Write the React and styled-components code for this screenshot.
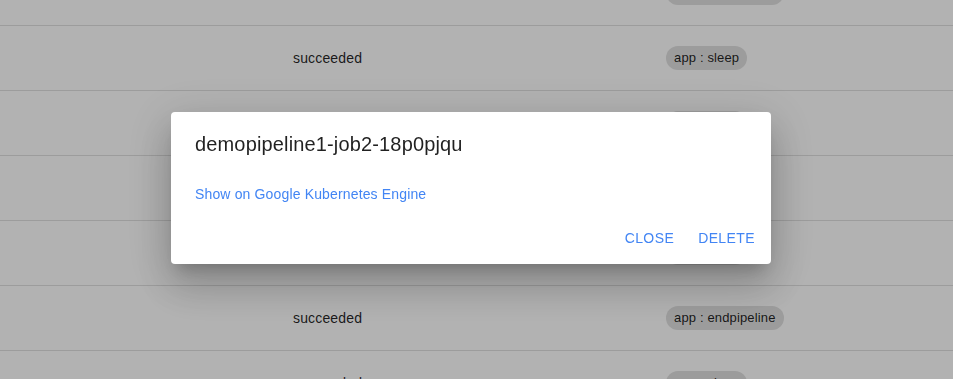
import React from 'react';
import styled, { createGlobalStyle } from 'styled-components';

const GlobalStyle = createGlobalStyle`
  html, body {
    margin: 0;
    padding: 0;
    background: #fff;
    overflow: hidden;
  }
  body {
    font-family: "Liberation Sans", Arial, Helvetica, sans-serif;
    color: rgba(0, 0, 0, 0.87);
  }
`;

const jobs = [
  { status: 'succeeded', label: 'app : endpipeline' },
  { status: 'succeeded', label: 'app : sleep' },
  { status: 'succeeded', label: 'app : sleep' },
  { status: 'succeeded', label: 'app : sleep' },
  { status: 'succeeded', label: 'app : sleep' },
  { status: 'succeeded', label: 'app : endpipeline' },
  { status: 'succeeded', label: 'app : sleep' },
];

export default function App() {
  return (
    <>
      <GlobalStyle />
      <Table>
        {jobs.map((job, i) => (
          <Row key={i}>
            <Cell />
            <Cell>{job.status}</Cell>
            <Cell>
              <Chip>{job.label}</Chip>
            </Cell>
          </Row>
        ))}
      </Table>

      <Backdrop>
        <Dialog role="dialog">
          <Title>demopipeline1-job2-18p0pjqu</Title>
          <Content>
            <LinkText href="#">Show on Google Kubernetes Engine</LinkText>
          </Content>
          <Actions>
            <TextButton>Close</TextButton>
            <TextButton>Delete</TextButton>
          </Actions>
        </Dialog>
      </Backdrop>
    </>
  );
}

const Table = styled.div`
  display: flex;
  flex-direction: column;
  height: 379px;
  overflow: hidden;
`;

const Row = styled.div`
  flex: none;
  display: grid;
  grid-template-columns: 293px 373px 1fr;
  height: 65px;
  box-sizing: border-box;
  border-bottom: 1px solid #e0e0e0;

  &:first-child {
    margin-top: -39px;
  }
`;

const Cell = styled.div`
  display: flex;
  align-items: center;
  font-size: 14px;
  line-height: 20px;
  letter-spacing: 0.01071em;
`;

const Chip = styled.span`
  display: inline-flex;
  align-items: center;
  height: 24px;
  padding: 0 8px;
  border-radius: 12px;
  background: #e0e0e0;
  font-size: 13px;
  color: rgba(0, 0, 0, 0.87);
  white-space: nowrap;
`;

const Backdrop = styled.div`
  position: fixed;
  inset: 0;
  background: rgba(0, 0, 0, 0.3);
  display: flex;
  align-items: center;
  justify-content: center;
  padding: 0 11px 3px 0;
`;

const Dialog = styled.div`
  width: 600px;
  background: #fff;
  border-radius: 4px;
  display: flex;
  flex-direction: column;
  box-shadow: 0px 11px 15px -7px rgba(0, 0, 0, 0.2),
    0px 24px 38px 3px rgba(0, 0, 0, 0.14),
    0px 9px 46px 8px rgba(0, 0, 0, 0.12);
`;

const Title = styled.h2`
  margin: 0;
  padding: 16px 24px 0;
  font-size: 20px;
  font-weight: 400;
  line-height: 32px;
  letter-spacing: 0.0075em;
  color: rgba(0, 0, 0, 0.87);
`;

const Content = styled.div`
  padding: 24px 24px 8px;
  font-size: 14px;
  line-height: 20px;
  letter-spacing: 0.01071em;
`;

const LinkText = styled.a`
  color: #4285f4;
  text-decoration: none;
`;

const Actions = styled.div`
  display: flex;
  justify-content: flex-end;
  gap: 8px;
  padding: 8px;
`;

const TextButton = styled.button`
  min-width: 64px;
  padding: 6px 8px;
  border: none;
  background: none;
  border-radius: 4px;
  font-family: inherit;
  font-size: 14px;
  font-weight: 400;
  line-height: 24.5px;
  letter-spacing: 0.4px;
  text-transform: uppercase;
  color: #4285f4;
  cursor: pointer;
`;
